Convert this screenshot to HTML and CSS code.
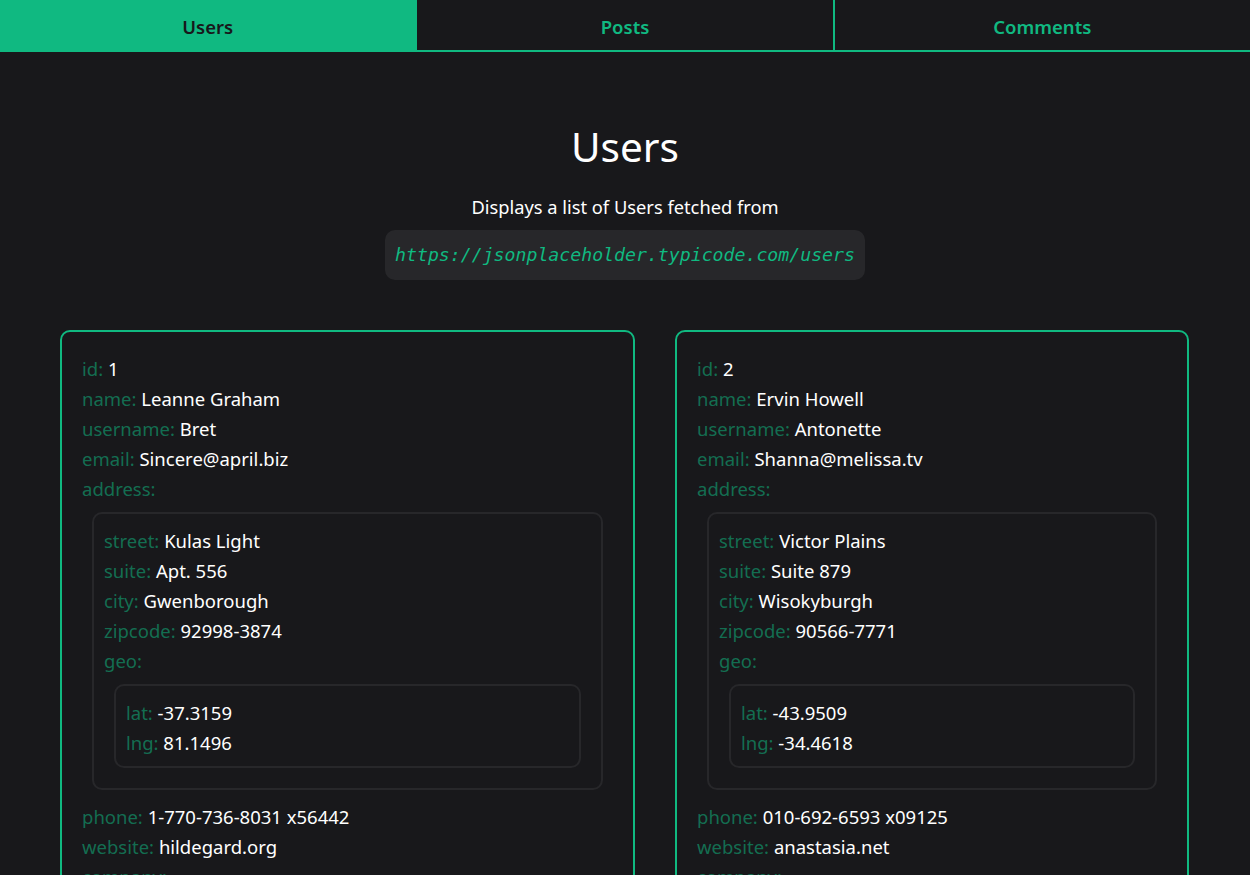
FILE: index.html
```html
<!DOCTYPE html>
<html lang="en">
<head>
<meta charset="utf-8">
<title>Users</title>
<link rel="stylesheet" href="styles.css">
</head>
<body>
<nav class="tabs">
  <a class="tab active" href="#">Users</a>
  <a class="tab" href="#">Posts</a>
  <a class="tab" href="#">Comments</a>
</nav>
<main class="page">
  <header class="intro">
    <h1 class="title">Users</h1>
    <p class="desc">Displays a list of Users fetched from</p>
    <code class="url">https://jsonplaceholder.typicode.com/users</code>
  </header>
  <section class="cards">
    <article class="card">
      <div class="row"><span class="k">id:</span> <span class="v">1</span></div>
      <div class="row"><span class="k">name:</span> <span class="v">Leanne Graham</span></div>
      <div class="row"><span class="k">username:</span> <span class="v">Bret</span></div>
      <div class="row"><span class="k">email:</span> <span class="v">Sincere@april.biz</span></div>
      <div class="row"><span class="k">address:</span></div>
      <div class="nest">
        <div class="row"><span class="k">street:</span> <span class="v">Kulas Light</span></div>
        <div class="row"><span class="k">suite:</span> <span class="v">Apt. 556</span></div>
        <div class="row"><span class="k">city:</span> <span class="v">Gwenborough</span></div>
        <div class="row"><span class="k">zipcode:</span> <span class="v">92998-3874</span></div>
        <div class="row"><span class="k">geo:</span></div>
        <div class="nest">
          <div class="row"><span class="k">lat:</span> <span class="v">-37.3159</span></div>
          <div class="row"><span class="k">lng:</span> <span class="v">81.1496</span></div>
        </div>
      </div>
      <div class="row"><span class="k">phone:</span> <span class="v">1-770-736-8031 x56442</span></div>
      <div class="row"><span class="k">website:</span> <span class="v">hildegard.org</span></div>
      <div class="row"><span class="k">company:</span></div>
      <div class="nest">
        <div class="row"><span class="k">name:</span> <span class="v">Romaguera-Crona</span></div>
        <div class="row"><span class="k">catchPhrase:</span> <span class="v">Multi-layered client-server neural-net</span></div>
        <div class="row"><span class="k">bs:</span> <span class="v">harness real-time e-markets</span></div>
      </div>
    </article>
    <article class="card">
      <div class="row"><span class="k">id:</span> <span class="v">2</span></div>
      <div class="row"><span class="k">name:</span> <span class="v">Ervin Howell</span></div>
      <div class="row"><span class="k">username:</span> <span class="v">Antonette</span></div>
      <div class="row"><span class="k">email:</span> <span class="v">Shanna@melissa.tv</span></div>
      <div class="row"><span class="k">address:</span></div>
      <div class="nest">
        <div class="row"><span class="k">street:</span> <span class="v">Victor Plains</span></div>
        <div class="row"><span class="k">suite:</span> <span class="v">Suite 879</span></div>
        <div class="row"><span class="k">city:</span> <span class="v">Wisokyburgh</span></div>
        <div class="row"><span class="k">zipcode:</span> <span class="v">90566-7771</span></div>
        <div class="row"><span class="k">geo:</span></div>
        <div class="nest">
          <div class="row"><span class="k">lat:</span> <span class="v">-43.9509</span></div>
          <div class="row"><span class="k">lng:</span> <span class="v">-34.4618</span></div>
        </div>
      </div>
      <div class="row"><span class="k">phone:</span> <span class="v">010-692-6593 x09125</span></div>
      <div class="row"><span class="k">website:</span> <span class="v">anastasia.net</span></div>
      <div class="row"><span class="k">company:</span></div>
      <div class="nest">
        <div class="row"><span class="k">name:</span> <span class="v">Deckow-Crist</span></div>
        <div class="row"><span class="k">catchPhrase:</span> <span class="v">Proactive didactic contingency</span></div>
        <div class="row"><span class="k">bs:</span> <span class="v">synergize scalable supply-chains</span></div>
      </div>
    </article>
  </section>
</main>
</body>
</html>
```
FILE: styles.css
```css
* { box-sizing: border-box; }
html, body {
  margin: 0;
  background: #18181b;
  color: #ffffff;
  font-family: "Noto Sans", "Open Sans", sans-serif;
}
.tabs {
  display: flex;
  height: 52px;
  border-bottom: 2px solid #10b981;
}
.tab {
  flex: 1;
  display: flex;
  align-items: center;
  justify-content: center;
  padding-top: 2px;
  color: #10b981;
  text-decoration: none;
  font-size: 18.5px;
  font-weight: 600;
  border-left: 2px solid #10b981;
}
.tab:first-child { border-left: none; }
.tab.active {
  background: #10b981;
  color: #18181b;
}
.intro {
  display: flex;
  flex-direction: column;
  align-items: center;
  padding-top: 68px;
}
.title {
  margin: 0;
  font-size: 40.5px;
  font-weight: 400;
  line-height: 54px;
}
.desc {
  margin: 20px 0 0;
  font-size: 18.3px;
  line-height: 26px;
}
.url {
  margin-top: 10px;
  background: #27272a;
  color: #10b981;
  font-family: "DejaVu Sans Mono", "Liberation Mono", monospace;
  font-style: italic;
  font-size: 18.2px;
  line-height: 26px;
  padding: 12px 10px;
  border-radius: 10px;
}
.cards {
  display: grid;
  grid-template-columns: 575fr 514fr;
  gap: 40px;
  padding: 50px 61px 0 60px;
}
.card {
  border: 2px solid #10b981;
  border-radius: 10px;
  padding: 22px 20px 20px;
  font-size: 18.5px;
  line-height: 30px;
}
.k { color: rgba(16, 185, 129, 0.55); }
.v { color: #ffffff; }
.nest {
  border: 2px solid #27272a;
  border-radius: 10px;
  margin: 8px 10px 12px;
  padding: 12px 10px 8px;
}
```
